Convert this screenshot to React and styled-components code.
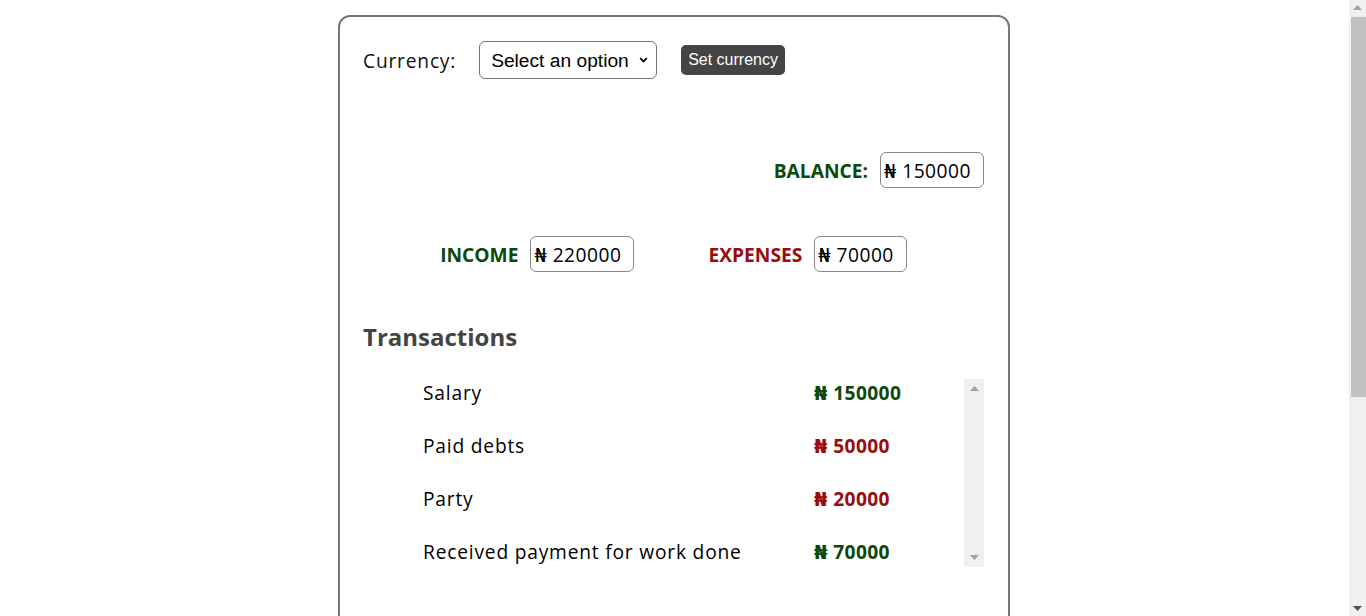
import React from "react";
import styled, { createGlobalStyle } from "styled-components";

const GREEN = "#0b4a0b";
const RED = "#9a0d0d";

const Global = createGlobalStyle`
  html, body { margin: 0; padding: 0; background: #fff; }
  body { font-family: "Open Sans", "DejaVu Sans", sans-serif; font-size: 19.2px; color: #111; }
`;

const Page = styled.div`
  padding: 15px 18px 15px 0;
  display: flex;
  justify-content: center;
`;

const WindowScrollbar = styled.div`
  position: fixed;
  top: 0;
  right: 0;
  width: 17px;
  height: 100vh;
  background: #f0f0f0;
  display: flex;
  flex-direction: column;
  align-items: center;
  justify-content: space-between;
  padding: 5px 0;
  box-sizing: border-box;
`;

const WindowThumb = styled.div`
  position: absolute;
  left: 2px;
  right: 0;
  top: 17px;
  height: 380px;
  background: #c1c1c1;
`;

const Arrow = styled.svg`
  display: block;
  flex: none;
`;

const Card = styled.main`
  width: 672px;
  box-sizing: border-box;
  height: 1080px;
  border: 2px solid #777;
  border-radius: 12px;
  padding: 24px 24px 24px 23px;
  display: flex;
  flex-direction: column;
`;

const CurrencyRow = styled.div`
  display: flex;
  align-items: center;
  height: 38px;
`;

const Label = styled.span`
  font-size: 19.2px;
  letter-spacing: 0.8px;
  color: #111;
  margin-right: 23px;
`;

const SelectWrap = styled.div`
  position: relative;
  width: 178px;
  height: 38px;
  margin-right: 24px;
`;

const Select = styled.select`
  appearance: none;
  width: 100%;
  height: 100%;
  box-sizing: border-box;
  border: 1px solid #767676;
  border-radius: 6px;
  background: #fff;
  font-family: "Liberation Sans", Arial, sans-serif;
  font-size: 19.2px;
  color: #000;
  padding: 0 0 0 11px;
`;

const Chevron = styled.svg`
  position: absolute;
  right: 9px;
  top: 16px;
  pointer-events: none;
`;

const Button = styled.button`
  height: 30px;
  padding: 0 7px;
  border: none;
  border-radius: 5px;
  background: #444;
  color: #fff;
  font-family: "Liberation Sans", Arial, sans-serif;
  font-size: 16px;
  line-height: 30px;
`;

const BalanceRow = styled.div`
  display: flex;
  justify-content: flex-end;
  align-items: center;
  margin-top: 73px;
  height: 36px;
`;

const SummaryRow = styled.div`
  display: flex;
  justify-content: center;
  align-items: center;
  gap: 74px;
  margin-top: 48px;
  height: 36px;
`;

const Group = styled.div`
  display: flex;
  align-items: center;
`;

const Tag = styled.span`
  font-weight: 700;
  font-size: 19.2px;
  color: ${(p) => p.$color};
  margin-right: ${(p) => p.$gap}px;
`;

const ValueBox = styled.span`
  display: inline-flex;
  align-items: center;
  height: 36px;
  box-sizing: border-box;
  border: 1px solid #888;
  border-radius: 6px;
  padding: 0 12px 0 3px;
  font-size: 19.2px;
  letter-spacing: 0.5px;
  color: #000;
`;

const Heading = styled.h2`
  margin: 47px 0 0;
  font-size: 24px;
  line-height: 36px;
  font-weight: 700;
  color: #444;
`;

const ListFrame = styled.div`
  margin-top: 24px;
  display: flex;
  height: 188px;
`;

const List = styled.ul`
  flex: 1;
  list-style: none;
  margin: 0;
  padding: 0 0 0 60px;
  overflow: hidden;
  display: flex;
  flex-direction: column;
  gap: 24px;
`;

const Track = styled.div`
  width: 20px;
  background: #f0f0f0;
  display: flex;
  flex-direction: column;
  align-items: center;
  justify-content: space-between;
  padding: 7px 0 7px;
  box-sizing: border-box;
`;

const Item = styled.li`
  display: grid;
  grid-template-columns: 391px auto;
  height: 29px;
  line-height: 28px;
  font-size: 19.2px;
`;

const Name = styled.span`
  color: #000;
  letter-spacing: 0.8px;
`;

const Amount = styled.span`
  font-weight: 700;
  letter-spacing: 0.4px;
  color: ${(p) => (p.$type === "income" ? GREEN : RED)};
`;

const transactions = [
  { name: "Salary", amount: 150000, type: "income" },
  { name: "Paid debts", amount: 50000, type: "expense" },
  { name: "Party", amount: 20000, type: "expense" },
  { name: "Received payment for work done", amount: 70000, type: "income" },
];

const Up = ({ color }) => (
  <Arrow width="9" height="5" viewBox="0 0 9 5">
    <path d="M0 5 L4.5 0 L9 5 Z" fill={color} />
  </Arrow>
);
const Down = ({ color }) => (
  <Arrow width="9" height="5" viewBox="0 0 9 5">
    <path d="M0 0 L4.5 5 L9 0 Z" fill={color} />
  </Arrow>
);

export default function App() {
  return (
    <>
      <Global />
      <Page>
        <Card>
          <CurrencyRow>
            <Label>Currency:</Label>
            <SelectWrap>
              <Select defaultValue="">
                <option value="">Select an option</option>
                <option value="NGN">NGN</option>
                <option value="USD">USD</option>
              </Select>
              <Chevron width="9" height="6" viewBox="0 0 9 6">
                <path d="M1.2 1.2 L4.5 4.5 L7.8 1.2" fill="none" stroke="#000" strokeWidth="1.8" />
              </Chevron>
            </SelectWrap>
            <Button>Set currency</Button>
          </CurrencyRow>

          <BalanceRow>
            <Tag $color={GREEN} $gap={12}>BALANCE:</Tag>
            <ValueBox>₦ 150000</ValueBox>
          </BalanceRow>

          <SummaryRow>
            <Group>
              <Tag $color={GREEN} $gap={12}>INCOME</Tag>
              <ValueBox>₦ 220000</ValueBox>
            </Group>
            <Group>
              <Tag $color={RED} $gap={12}>EXPENSES</Tag>
              <ValueBox>₦ 70000</ValueBox>
            </Group>
          </SummaryRow>

          <Heading>Transactions</Heading>

          <ListFrame>
            <List>
              {transactions.map((t) => (
                <Item key={t.name}>
                  <Name>{t.name}</Name>
                  <Amount $type={t.type}>₦ {t.amount}</Amount>
                </Item>
              ))}
            </List>
            <Track>
              <Up color="#a3a3a3" />
              <Down color="#a3a3a3" />
            </Track>
          </ListFrame>
        </Card>
      </Page>
      <WindowScrollbar>
        <Up color="#a3a3a3" />
        <WindowThumb />
        <Down color="#505050" />
      </WindowScrollbar>
    </>
  );
}
